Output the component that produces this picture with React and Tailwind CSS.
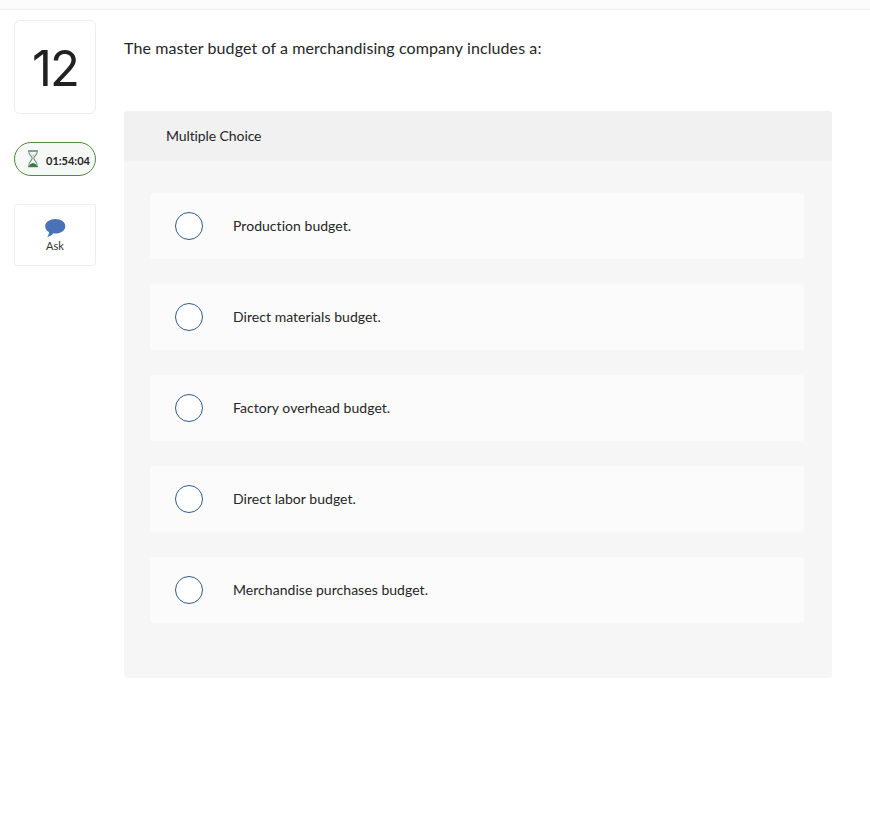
import React from 'react';

const choices = [
  'Production budget.',
  'Direct materials budget.',
  'Factory overhead budget.',
  'Direct labor budget.',
  'Merchandise purchases budget.',
];

const Hourglass = () => (
  <svg width="12" height="18" viewBox="0 0 12 18" fill="none" className="shrink-0">
    <path d="M1.500 1h9M1.500 16.500h9" stroke="#5b7f8a" strokeWidth="1.300" strokeLinecap="round" />
    <path d="M1.800 1.500c-.3 3.500 3.400 4.800 3.400 6.800s-3.700 3.700-3.400 7.200M10.200 1.500c.3 3.500-3.400 4.800-3.400 6.800s3.700 3.700 3.400 7.200" stroke="#6d8d95" strokeWidth="1.100" />
    <path d="M3.500 4.500h5L6 7.500z" fill="#e6d9b8" />
    <path d="M1.800 16.500c.4-1.900 2.200-3.100 4.200-3.500 2 .4 3.800 1.600 4.200 3.500z" fill="#3c7a2e" />
  </svg>
);

const SpeechBubble = () => (
  <svg width="22" height="20" viewBox="0 0 22 20">
    <path d="M11.500 1c5.500 0 9.800 2.900 9.800 7.200s-4.300 7.300-9.800 7.300c-.8 0-1.500-.1-2.200-.2C7.800 17.300 5.500 18.800 3.200 19c1-1.200 1.700-2.800 1.800-4.800C2.700 12.800 1.200 10.700 1.200 8.200 1.200 3.900 6 1 11.500 1z" fill="#4a72b8" />
  </svg>
);

const App = () => {
  return (
    <div className="w-[870px] h-[839px] bg-white text-[#262626] overflow-hidden [font-variant-ligatures:none]" style={{ fontFamily: 'Lato, "Open Sans", sans-serif' }}>
      <div className="h-2.5 bg-[#fcfcfc] border-b border-[#eeeeee]"></div>
      <div className="flex pt-2.5 pl-3.5">
        <div className="w-[82px] shrink-0 flex flex-col">
          <div className="h-[94px] border border-[#eeeeee] rounded-md flex items-center justify-center pt-0.5 font-['Inter'] text-[49px] leading-none tracking-[-2px] text-[#212121]">
            12
          </div>
          <div className="mt-7 h-[34px] border-[1.5px] border-[#4f8a3c] rounded-full bg-[#f5f8f5] flex items-center gap-[7px] pl-3">
            <Hourglass />
            <span className="mt-[5px] text-[11px] font-bold">01:54:04</span>
          </div>
          <div className="mt-7 h-[62px] border border-[#eeeeee] rounded-[3px] flex flex-col items-center pt-[13px]">
            <SpeechBubble />
            <span className="mt-px text-[11px] leading-[14px] text-[#333333]">Ask</span>
          </div>
        </div>
        <div className="w-[708px] ml-7">
          <p className="mt-[7px] pt-2.5 h-[84px] text-[16px] leading-[22px] tracking-[0.09px]">The master budget of a merchandising company includes a:</p>
          <div className="h-[567px] bg-[#f6f6f6] rounded-[3px] overflow-hidden">
            <div className="h-[50px] bg-[#f1f1f1] flex items-center pl-[42px] pb-0.5 text-[14px] tracking-[-0.1px]">Multiple Choice</div>
            <div className="pt-8 pl-[26px] pr-[28px] flex flex-col gap-[25px]">
              {choices.map((c) => (
                <div key={c} className="h-[66px] bg-[#fbfbfb] rounded-[3px] flex items-center pl-[25px]">
                  <div className="w-[28px] h-[28px] rounded-full border-[1.5px] border-[#2f5a8f] bg-white"></div>
                  <span className="ml-[30px] mb-0.5 text-[14px] tracking-[0.04px]">{c}</span>
                </div>
              ))}
            </div>
          </div>
        </div>
      </div>
    </div>
  );
};

export default App;
